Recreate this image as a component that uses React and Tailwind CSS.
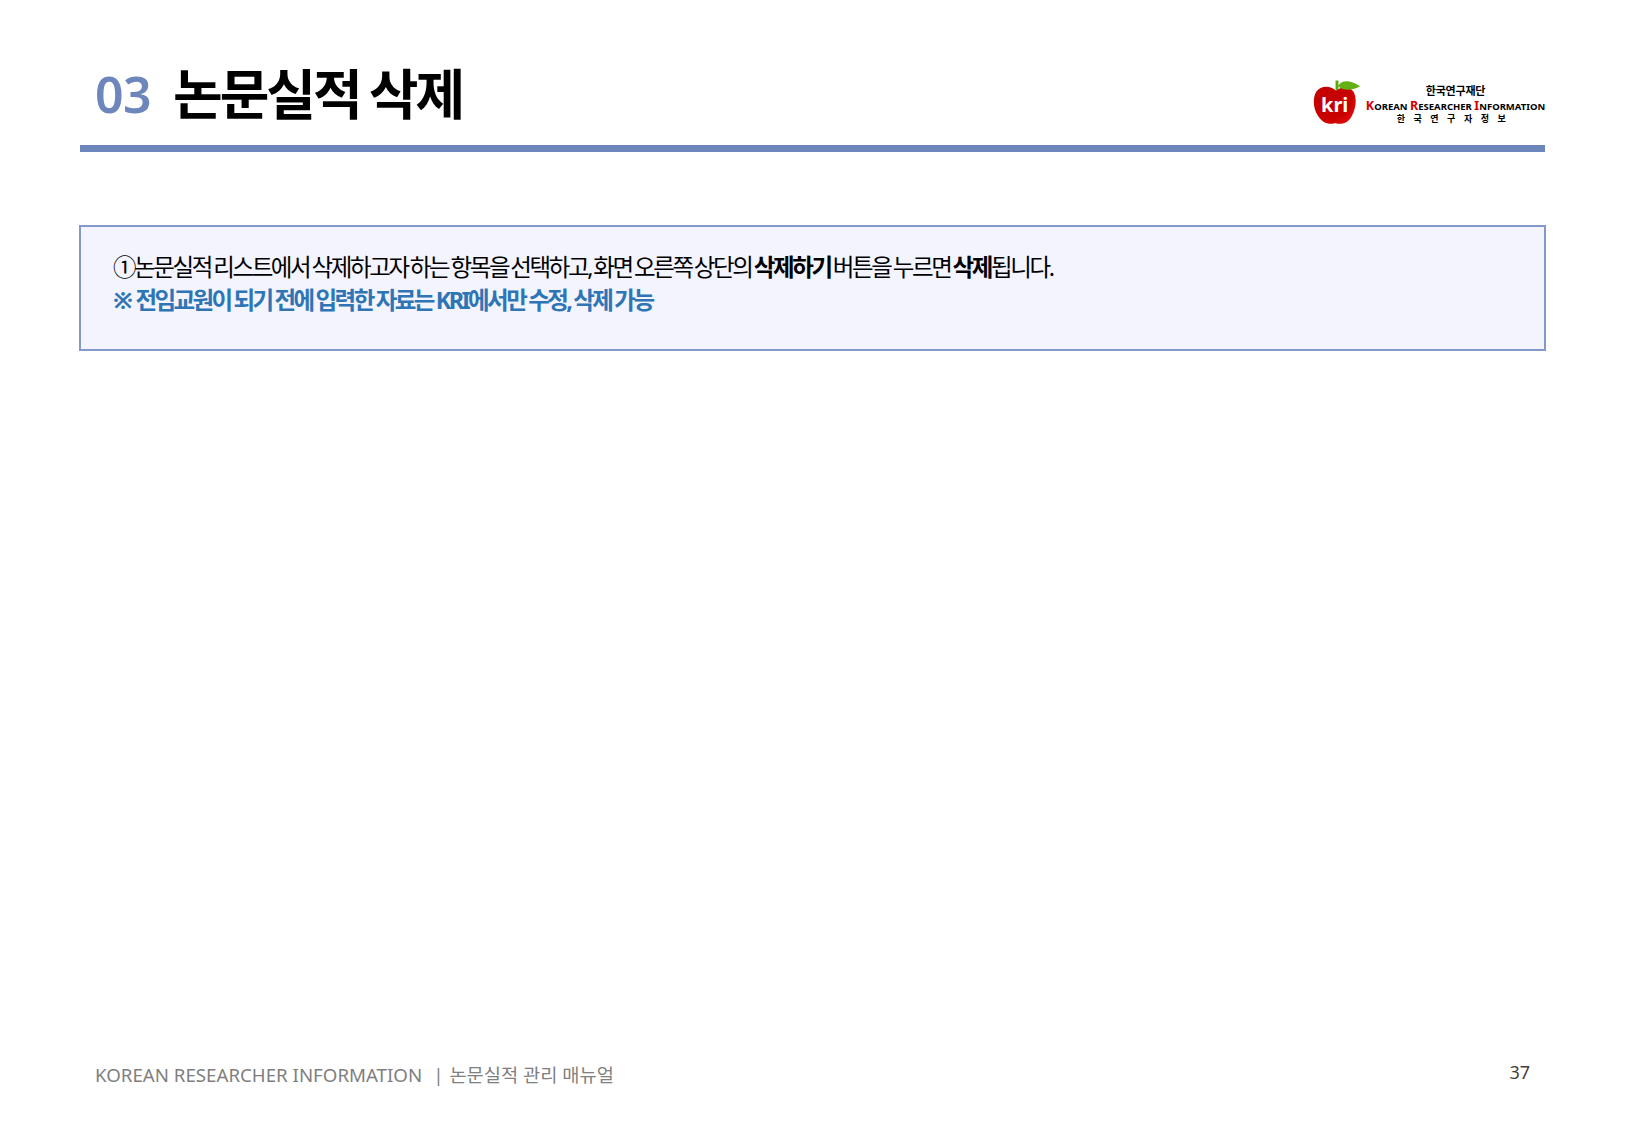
const font = { fontFamily: '"Noto Sans", "Noto Sans CJK KR", sans-serif' }

function KriApple() {
  return (
    <svg width="48" height="46" viewBox="0 0 50 44" preserveAspectRatio="none" className="shrink-0">
      <defs>
        <radialGradient id="appleShade" cx="0.35" cy="0.35" r="0.8">
          <stop offset="0" stopColor="#c40000" />
          <stop offset="0.65" stopColor="#c80000" />
          <stop offset="1" stopColor="#e81010" />
        </radialGradient>
      </defs>
      <path d="M24 11C18 6 8 6 3.500 12C-0.500 18 0 28 5 35C10 43 18 44 23 42C28 44 36 43 40 36C45 28 46 18 42 12C38 7 30 7 24 11Z" fill="url(#appleShade)" />
      <path d="M23.500 11L23.500 1.500L26.500 1.500L26.500 10Z" fill="#5aa80a" />
      <path d="M26 7C29 1 38 0 49 7C42 11 32 12 26 7Z" fill="#62b012" />
    </svg>
  )
}

function Logo() {
  return (
    <div className="flex items-end mb-[20px]" style={font}>
      <div className="relative mr-[5px]">
        <KriApple />
        <span className="absolute left-[8px] top-[13px] text-[20px] leading-[26px] font-bold text-white">kri</span>
      </div>
      <div className="flex flex-col items-center w-[179px] font-bold text-black">
        <span className="text-[11px] leading-[15px] tracking-[-0.2px] mb-[1px]">한국연구재단</span>
        <span className="text-[9.500px] leading-[13px] whitespace-nowrap">
          <span className="text-[12.500px] text-[#d40000]">K</span>OREAN{' '}
          <span className="text-[12.500px] text-[#d40000]">R</span>ESEARCHER{' '}
          <span className="text-[12.500px] text-[#d40000]">I</span>NFORMATION
        </span>
        <span className="text-[9px] leading-[12px] tracking-[8.500px] ml-[8px] mr-[8px]">한국연구자정보</span>
      </div>
    </div>
  )
}

export default function App() {
  return (
    <div className="h-[1125px] bg-white flex flex-col pl-[79px] pr-[80px] overflow-hidden" style={font}>
      {/* Header */}
      <div className="h-[152px] ml-[1px] mr-[1px] flex justify-between items-end border-b-[7px] border-[#6d87bd]">
        <div className="flex items-center pl-[15px] mb-[19px]">
          <span className="text-[50px] leading-[64px] font-semibold text-[#6d87bd] tracking-[-0.500px] w-[78px]">03</span>
          <h1 className="text-[54px] leading-[64px] font-bold text-black tracking-[-3px] [word-spacing:-2px]">논문실적 삭제</h1>
        </div>
        <Logo />
      </div>

      {/* 안내 박스 */}
      <div className="mt-[73px] h-[126px] border-2 border-[#8499c8] bg-[#f3f4fe] pl-[32px] pt-[24px] text-[23.500px] leading-[33px]">
        <p className="text-black tracking-[-2.400px] [word-spacing:-1.500px]">
          ①논문실적 리스트에서 삭제하고자 하는 항목을 선택하고, 화면 오른쪽 상단의 <b className="font-bold">삭제하기</b> 버튼을 누르면 <b className="font-bold">삭제</b>됩니다.
        </p>
        <p className="font-bold text-[#2e75b6] tracking-[-2.600px] [word-spacing:-0.500px]">
          <span className="mr-[2px]">※</span> 전임교원이 되기 전에 입력한 자료는 KRI에서만 수정, 삭제 가능
        </p>
      </div>

      {/* Footer */}
      <div className="mt-auto mb-[36px] pl-[16px] pr-[16px] flex justify-between items-start">
        <span className="text-[18.700px] leading-[28px] text-[#7f7f7f]">
          KOREAN RESEARCHER INFORMATION
          <span className="ml-[11px]">|</span>
          <span className="ml-[6px]">논문실적 관리 매뉴얼</span>
        </span>
        <span className="text-[18px] leading-[22px] text-[#404040]">37</span>
      </div>
    </div>
  )
}
